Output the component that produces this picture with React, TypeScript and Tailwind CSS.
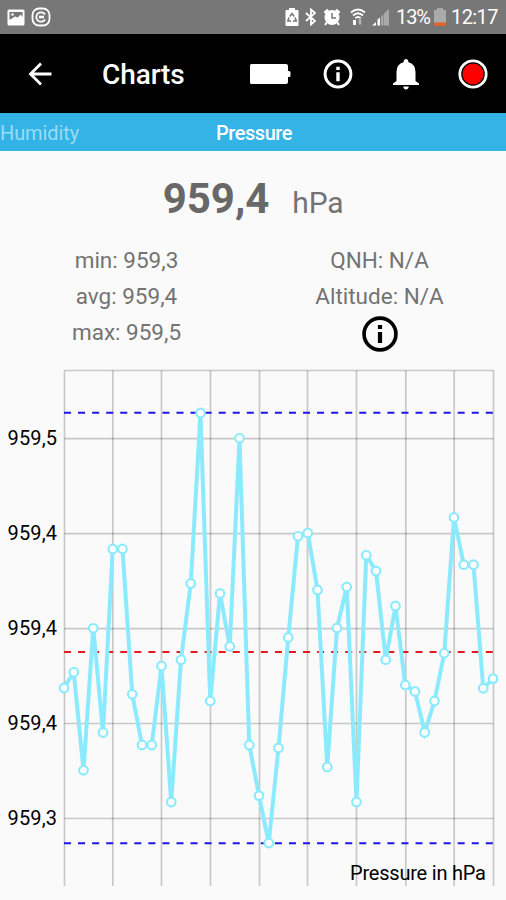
const CHART = { left: 64.5, right: 493.5, top: 10.5, bottom: 526 };

// y positions of the samples inside the chart, evenly spaced along x
const SAMPLES = [
  328, 312.3, 410.3, 268.3, 372.5, 189, 189, 334.3, 385, 385, 306, 442, 299.8, 223.5, 53,
  341, 233.5, 286.5, 78.3, 385, 435.6, 483, 388, 277.5, 176.3, 173, 230, 407, 268, 227,
  442, 195.3, 211, 299.7, 246, 325, 331.5, 372.4, 341, 293.3, 157.5, 204.7, 204.7, 328.3, 318.6,
];

const POINTS = SAMPLES.map((y, i) => ({ x: 64 + i * 9.75, y }));

const COLUMNS = [64.5, 112.8, 161.5, 210.5, 259.5, 307.5, 356.5, 405.8, 454.2, 493.5];

const ROWS = [
  { y: 78.7, label: '959,5' },
  { y: 173.7, label: '959,4' },
  { y: 268.6, label: '959,4' },
  { y: 363.5, label: '959,4' },
  { y: 458.5, label: '959,3' },
];

const LIMITS = [
  { y: 52.7, color: '#1c17e6' },
  { y: 292, color: '#e01b22' },
  { y: 483.3, color: '#1c17e6' },
];

function InfoIcon({ className }: { className: string }) {
  return (
    <svg viewBox="0 0 24 24" className={className} fill="none" stroke="currentColor">
      <circle cx="12" cy="12" r="9.100" strokeWidth="2.100" />
      <path d="M12 6.900v2.200M12 10.800v6.300" strokeWidth="2.400" />
    </svg>
  );
}

function StatusBar() {
  return (
    <div className="flex h-[34px] items-center bg-[#777777] pl-[7px] pr-2 text-white">
      <svg viewBox="0 0 18 17" className="h-[17px] w-[18px]">
        <rect x="0.5" y="0.5" width="17" height="16" rx="1.5" fill="#fff" />
        <path d="M2.5 3h13v5l-2-2.500-2.500 3-3-1-5.500 3.500z" fill="#777777" />
        <circle cx="5.500" cy="5.500" r="1.300" fill="#fff" />
      </svg>
      <svg viewBox="0 0 20 20" className="ml-[6px] h-5 w-5" fill="none" stroke="#fff">
        <rect x="1.500" y="1.500" width="17" height="17" rx="6.500" strokeWidth="1.800" />
        <path d="M14 7.500a4.700 4.700 0 1 0 0 5" strokeWidth="1.800" />
        <path d="M8 10h5" strokeWidth="2.600" />
      </svg>

      <div className="ml-auto flex items-center">
        <svg viewBox="0 0 14 18" className="h-[18px] w-[14px]">
          <path d="M4 0h6v2h2.500q1 0 1 1v14q0 1-1 1h-11q-1 0-1-1V3q0-1 1-1H4z" fill="#fff" />
          <path d="M4.800 8.500L7 5.500l2.200 3M10 9.500l1.300 3.500H8M6.200 13H2.800L4 9.500" fill="none" stroke="#777777" strokeWidth="1.500" />
        </svg>
        <svg viewBox="0 0 12 18" className="ml-[6px] h-[18px] w-3" fill="none" stroke="#fff" strokeWidth="1.800">
          <path d="M1 5l9 8-4 3.500v-15L10 5l-9 8" />
        </svg>
        <svg viewBox="0 0 18 18" className="ml-[6px] h-[18px] w-[18px]">
          <path d="M1.500 5L5 1.700M16.500 5L13 1.700" stroke="#fff" strokeWidth="2.600" />
          <circle cx="9" cy="9.500" r="7.500" fill="#fff" />
          <path d="M4 14l-2 3M14 14l2 3" stroke="#fff" strokeWidth="2" />
          <path d="M9 5v5h4" fill="none" stroke="#777777" strokeWidth="1.500" />
        </svg>
        <svg viewBox="0 0 16 18" className="ml-[9px] h-[18px] w-4" fill="none" stroke="#fff">
          <path d="M1 4.500q7-6 14 0M3 7.500q5-4.500 10 0M5.300 10.200q2.700-2.500 5.400 0" strokeWidth="1.800" />
          <path d="M4.500 12v5" strokeWidth="3" />
          <path d="M10 11v5.500" strokeWidth="2.500" stroke="#b5b5b5" />
        </svg>
        <svg viewBox="0 0 18 18" className="ml-[6px] h-[18px] w-[18px]">
          <path d="M0 17.500l4-3.500v3.500zM5.500 17.500v-6l2.500-2v8z" fill="#fff" />
          <path d="M9 17.500V9l2.500-3v11.500zM12 17.500V5.500L17 1v16.500z" fill="#a9a9a9" />
        </svg>
        <span className="ml-[6px] w-[34px] whitespace-nowrap text-[20px] leading-[34px] tracking-[-1.100px]">13%</span>
        <svg viewBox="0 0 12 18" className="ml-1 h-[18px] w-3">
          <path d="M3 0h6v2h3v13H0V2h3z" fill="#aaaaaa" />
          <path d="M0 14.500h12V18H0z" fill="#e0632c" />
        </svg>
        <span className="ml-[5px] w-[47px] whitespace-nowrap text-[20px] leading-[34px] tracking-[-0.600px]">12:17</span>
      </div>
    </div>
  );
}

function Toolbar() {
  return (
    <div className="flex h-[79px] items-center bg-black pr-[18px] text-white">
      <svg viewBox="0 0 24 24" className="ml-[28px] h-6 w-6" fill="none" stroke="currentColor" strokeWidth="2.800">
        <path d="M23.500 12H2.500M13 1.500L2.500 12 13 22.500" />
      </svg>
      <h1 className="ml-[50px] pt-[3px] text-[28px] font-medium leading-8 tracking-[-0.100px]">Charts</h1>
      <div className="ml-auto flex items-center">
        <svg viewBox="0 0 41 20" className="h-5 w-[41px]" fill="currentColor">
          <path d="M1.500 0H36q2 0 2 2v5h1q1.500 0 1.500 1.500v3q0 1.500-1.500 1.500h-1v5q0 2-2 2H1.500Q0 20 0 18.500v-17Q0 0 1.500 0z" />
        </svg>
        <InfoIcon className="ml-[30px] h-[34px] w-[34px]" />
        <svg viewBox="0 0 26 31" className="ml-[38px] mt-px h-[31px] w-[26px]" fill="currentColor">
          <path d="M10.500 3.300Q11 0 13 0t2.500 3.300q7 2 7 9.700v9l3.500 2.500V26H0v-1.500L3.500 22v-9q0-7.700 7-9.700zM10.200 27.500h5.600q-.5 3-2.800 3t-2.800-3z" />
        </svg>
        <svg viewBox="0 0 30 30" className="ml-[39px] h-[30px] w-[30px]">
          <circle cx="15" cy="15" r="13.200" fill="#000" stroke="#fff" strokeWidth="2.800" />
          <circle cx="15" cy="15" r="10.500" fill="#fe0000" />
        </svg>
      </div>
    </div>
  );
}

function PressureChart() {
  const line = POINTS.map((p) => `${p.x},${p.y}`).join(' ');

  return (
    <svg viewBox="0 0 506 540" className="block h-[540px] w-[506px]">
      <g stroke="#000" strokeOpacity="0.200" strokeWidth="1.700">
        {COLUMNS.map((x) => (
          <line key={x} x1={x} x2={x} y1={CHART.top} y2={CHART.bottom} />
        ))}
        <line x1={CHART.left} x2={CHART.right} y1={CHART.top} y2={CHART.top} />
        {ROWS.map(({ y }) => (
          <line key={y} x1={CHART.left} x2={CHART.right} y1={y} y2={y} />
        ))}
      </g>
      {LIMITS.map(({ y, color }) => (
        <line key={y} x1="64" x2="493" y1={y} y2={y} stroke={color} strokeWidth="2" strokeDasharray="7.030 7.030" />
      ))}
      <polyline points={line} fill="none" stroke="#8ceaff" strokeWidth="4" />
      {POINTS.map(({ x, y }) => (
        <circle key={x} cx={x} cy={y} r="4.300" fill="#fff" stroke="#8ceaff" strokeWidth="2.200" />
      ))}
      {ROWS.map(({ y, label }) => (
        <text key={y} x="57" y={y + 6} textAnchor="end" fontSize="20" textLength="49.500">
          {label}
        </text>
      ))}
      <text x="486" y="519.500" textAnchor="end" fontSize="20" textLength="136">
        Pressure in hPa
      </text>
    </svg>
  );
}

export default function App() {
  return (
    <div className="flex h-[900px] w-[506px] flex-col overflow-hidden bg-[#fafafa] font-['Roboto',sans-serif]">
      <StatusBar />
      <Toolbar />
      <div className="grid h-[38px] shrink-0 grid-cols-3 items-center bg-[#33b3e6] text-[20px] leading-[38px]">
        <span className="pt-px tracking-[-0.100px] text-[#99dcf5]">Humidity</span>
        <span className="pl-0.5 pt-px text-center font-medium tracking-[-0.450px] text-white">Pressure</span>
      </div>

      <div className="h-[209px] shrink-0 text-[#737373]">
        <div className="flex h-[91px] items-baseline justify-center gap-[23px] pt-[22px]">
          <span className="text-[42px] font-bold leading-[52px] text-[#686868]">959,4</span>
          <span className="text-[30px] tracking-[-0.200px]">hPa</span>
        </div>
        <div className="grid grid-cols-2 text-center text-[22.500px] leading-9">
          <div>
            <p>min: 959,3</p>
            <p>avg: 959,4</p>
            <p>max: 959,5</p>
          </div>
          <div className="flex flex-col items-center">
            <p>QNH: N/A</p>
            <p>Altitude: N/A</p>
            <InfoIcon className="-mt-px h-[42px] w-[42px] text-black" />
          </div>
        </div>
      </div>

      <PressureChart />
    </div>
  );
}
